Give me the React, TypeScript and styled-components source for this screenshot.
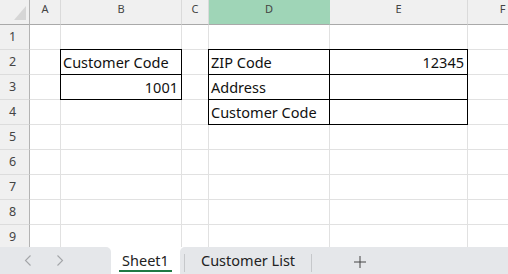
import React from "react";
import styled, { createGlobalStyle, css } from "styled-components";

const GlobalStyle = createGlobalStyle`
  html, body { margin: 0; padding: 0; background: #fff; }
  body { font-family: "Noto Sans", "Liberation Sans", sans-serif; overflow: hidden; }
  * { box-sizing: border-box; }
`;

const Frame = styled.div`
  width: 508px;
  height: 274px;
  display: flex;
  flex-direction: column;
  overflow: hidden;
  background: #fff;
`;

const Sheet = styled.div`
  flex: 1;
  min-height: 0;
  overflow: hidden;
  display: grid;
  grid-template-columns: 30px 31px 121px 27px 121px 138px 70px;
  grid-auto-rows: 25px;
  align-content: start;
`;

const Corner = styled.div`
  background: #f0f0f0;
  border-right: 1px solid #b3b3b3;
  border-bottom: 1px solid #a9a9a9;
  display: flex;
  justify-content: flex-end;
  align-items: flex-end;
  padding: 0 3px 4px 0;
`;

const ColHeader = styled.div<{ $selected?: boolean }>`
  background: ${(p) => (p.$selected ? "#9fd5b7" : "#f0f0f0")};
  border-right: 1px solid ${(p) => (p.$selected ? "#9fd5b7" : "#dadada")};
  border-bottom: 1px solid #a9a9a9;
  color: #444;
  font-size: 11px;
  line-height: 18px;
  text-align: center;
`;

const RowHeader = styled.div`
  background: #f0f0f0;
  border-right: 1px solid #b3b3b3;
  border-bottom: 1px solid #dcdcdc;
  color: #444;
  font-size: 12.5px;
  line-height: 24px;
  text-align: center;
  padding-right: 4px;
`;

const Cell = styled.div<{ $align?: "left" | "right"; $boxed?: boolean }>`
  border-right: 1px solid #e1e1e1;
  border-bottom: 1px solid #e1e1e1;
  font-size: 14.5px;
  line-height: 24px;
  color: #111;
  padding: 0 3px 0 2px;
  white-space: nowrap;
  overflow: visible;
  text-align: ${(p) => p.$align ?? "left"};
  ${(p) =>
    p.$boxed &&
    css`
      position: relative;
      &::after {
        content: "";
        position: absolute;
        inset: -1px;
        border: 1px solid #000;
        pointer-events: none;
      }
    `}
`;

const TabBar = styled.div`
  height: 27px;
  flex: none;
  display: flex;
  background: #fff;
`;

const NavArea = styled.div`
  width: 111px;
  background: #e5e7ea;
  border-top-right-radius: 5px;
  display: flex;
  align-items: center;
  padding-left: 12px;
`;

const NavButton = styled.div`
  width: 32px;
  height: 100%;
  display: flex;
  align-items: center;
  justify-content: center;
`;

const ActiveTab = styled.div`
  width: 69px;
  display: flex;
  justify-content: center;
  padding-top: 3px;
`;

const ActiveLabel = styled.span`
  display: inline-block;
  height: 22px;
  padding: 0 3px;
  font-size: 14.5px;
  line-height: 20px;
  color: #222;
  border-bottom: 2px solid #1f7a44;
`;

const RestArea = styled.div`
  flex: 1;
  background: #e5e7ea;
  border-top-left-radius: 5px;
  display: flex;
  align-items: flex-start;
  padding-left: 4px;
`;

const Separator = styled.div`
  width: 1px;
  height: 18px;
  margin-top: 7px;
  background: #c6c8cb;
`;

const Tab = styled.div`
  padding: 3px 16px 0;
  font-size: 14.5px;
  line-height: 20px;
  color: #222;
  white-space: nowrap;
`;

const AddButton = styled.div`
  width: 95px;
  height: 100%;
  display: flex;
  align-items: center;
  justify-content: center;
  padding-top: 2px;
`;

const Chevron = ({ dir }: { dir: "left" | "right" }) => (
  <svg width="8" height="11" viewBox="0 0 8 11">
    <path
      d={dir === "left" ? "M6.5 0.5 L1.5 5.5 L6.5 10.5" : "M1.5 0.5 L6.5 5.5 L1.5 10.5"}
      fill="none"
      stroke="#a3a5a8"
      strokeWidth="1.1"
    />
  </svg>
);

const Plus = () => (
  <svg width="12" height="12" viewBox="0 0 12 12">
    <path d="M6 0 V12 M0 6 H12" stroke="#444" strokeWidth="1" />
  </svg>
);

const Triangle = () => (
  <svg width="12" height="14" viewBox="0 0 12 14">
    <polygon points="0,14 12,14 12,0" fill="#d6d6d6" />
  </svg>
);

type CellData = { text?: string; align?: "left" | "right"; boxed?: boolean };

const columns = ["A", "B", "C", "D", "E", "F"];

const rows: CellData[][] = [
  [{}, {}, {}, {}, {}, {}],
  [{}, { text: "Customer Code", boxed: true }, {}, { text: "ZIP Code", boxed: true }, { text: "12345", align: "right", boxed: true }, {}],
  [{}, { text: "1001", align: "right", boxed: true }, {}, { text: "Address", boxed: true }, { boxed: true }, {}],
  [{}, {}, {}, { text: "Customer Code", boxed: true }, { boxed: true }, {}],
  [{}, {}, {}, {}, {}, {}],
  [{}, {}, {}, {}, {}, {}],
  [{}, {}, {}, {}, {}, {}],
  [{}, {}, {}, {}, {}, {}],
  [{}, {}, {}, {}, {}, {}],
];

export default function App() {
  return (
    <>
      <GlobalStyle />
      <Frame>
        <Sheet>
          <Corner>
            <Triangle />
          </Corner>
          {columns.map((c) => (
            <ColHeader key={c} $selected={c === "D"}>
              {c}
            </ColHeader>
          ))}
          {rows.map((row, r) => (
            <React.Fragment key={r}>
              <RowHeader>{r + 1}</RowHeader>
              {row.map((cell, c) => (
                <Cell key={c} $align={cell.align} $boxed={cell.boxed}>
                  {cell.text}
                </Cell>
              ))}
            </React.Fragment>
          ))}
        </Sheet>
        <TabBar>
          <NavArea>
            <NavButton>
              <Chevron dir="left" />
            </NavButton>
            <NavButton>
              <Chevron dir="right" />
            </NavButton>
          </NavArea>
          <ActiveTab>
            <ActiveLabel>Sheet1</ActiveLabel>
          </ActiveTab>
          <RestArea>
            <Separator />
            <Tab>Customer List</Tab>
            <Separator />
            <AddButton>
              <Plus />
            </AddButton>
          </RestArea>
        </TabBar>
      </Frame>
    </>
  );
}
